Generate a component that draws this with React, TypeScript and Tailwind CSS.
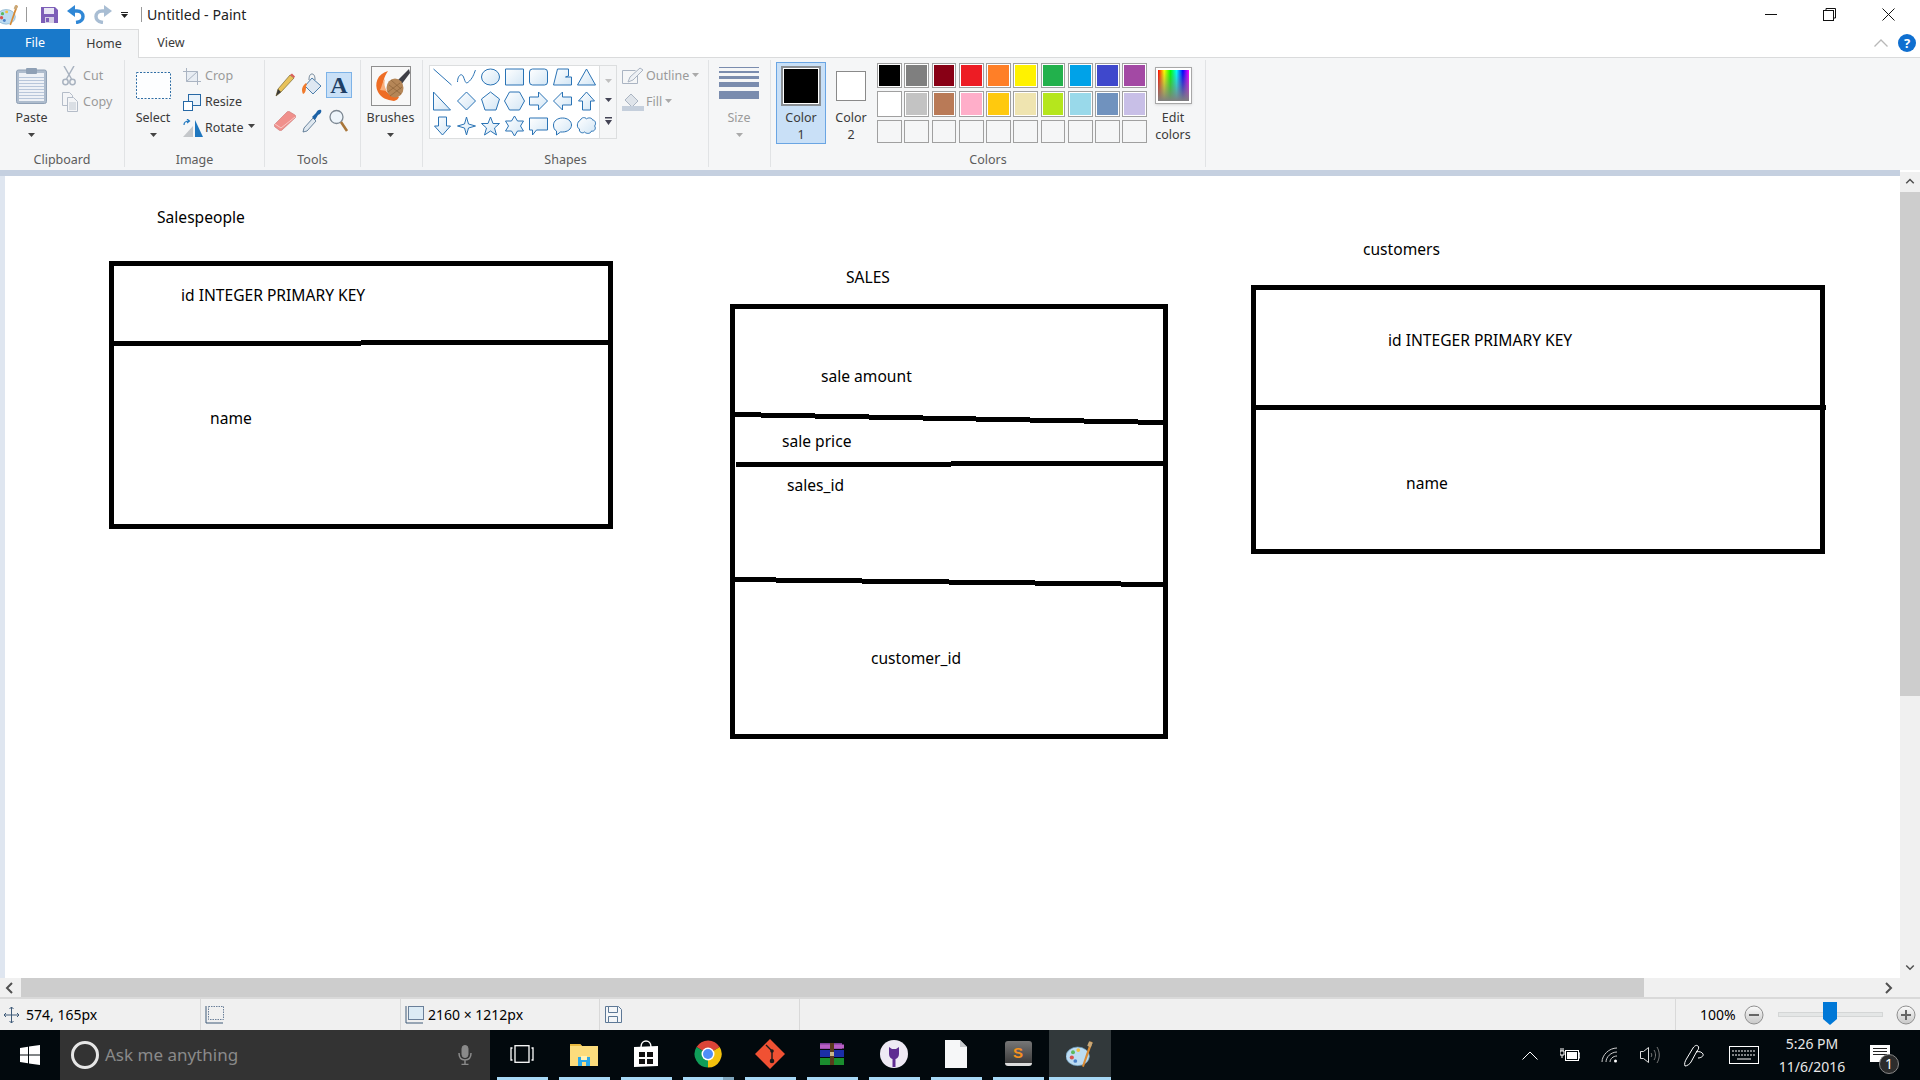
import React from "react";

const Caret = ({ c = "#444" }: { c?: string }) => (
  <svg width="7" height="4" viewBox="0 0 7 4"><path d="M0 0h7L3.5 4z" fill={c} /></svg>
);

const PaintIcon = ({ w = 24, h = 24 }: { w?: number; h?: number }) => (
  <svg width={w} height={h} viewBox="0 0 24 24">
    <ellipse cx="10" cy="14" rx="10" ry="8" fill="#bcdcf2" stroke="#6d9dbd" strokeWidth="0.6" />
    <circle cx="5" cy="15" r="1.8" fill="#d9534f" />
    <circle cx="6" cy="10.5" r="1.7" fill="#5cb85c" />
    <circle cx="10.5" cy="8.6" r="1.6" fill="#f0c040" />
    <circle cx="8" cy="18" r="1.6" fill="#4a80c8" />
    <path d="M21 1l1.8 1.2-7.5 21-1.6-.6z" fill="#d88a34" />
    <path d="M19.8 1l3 1.4-1.6 4-3-1.4z" fill="#c8a878" />
  </svg>
);

const Save = ({ c = "#7d5fb8", w = 17, h = 16 }: { c?: string; w?: number; h?: number }) => (
  <svg width={w} height={h} viewBox="0 0 17 16">
    <path d="M0 0h14l3 3v13H0z" fill={c} />
    <rect x="3" y="1" width="10" height="6" fill="#e8e6f4" />
    <rect x="4" y="10" width="9" height="6" fill="#d5d0e6" />
    <rect x="5" y="11" width="3" height="4" fill={c} />
  </svg>
);

const Arrow = ({ c, flip }: { c: string; flip?: boolean }) => (
  <svg width="18" height="19" viewBox="0 0 18 19" className={flip ? "-scale-x-100" : ""}>
    <path d="M7 6h3c4 0 6 2.500 6 5.500S13.500 17 9 17.500" fill="none" stroke={c} strokeWidth="3.400" />
    <path d="M8 0v12L0 6z" fill={c} />
  </svg>
);

const PasteIcon = () => (
  <svg width="31" height="37" viewBox="0 0 31 37">
    <rect x="0.500" y="3" width="30" height="33.500" rx="2" fill="#aebccd" stroke="#8fa0b5" />
    <rect x="3" y="6" width="25" height="28" fill="#eef1f6" />
    {[10, 13, 16, 19, 22, 25, 28, 31].map((y) => (
      <rect key={y} x="3" y={y} width="25" height="1" fill="#b8c6da" />
    ))}
    <rect x="10" y="1" width="11" height="6" rx="1" fill="#8fa0b5" />
  </svg>
);

const Scissors = () => (
  <svg width="14" height="20" viewBox="0 0 14 20" fill="none" stroke="#a9b3c0" strokeWidth="1.500">
    <path d="M2 0l7.500 13M12 0L4.500 13" />
    <circle cx="3.500" cy="16" r="2.700" />
    <circle cx="10.500" cy="16" r="2.700" />
  </svg>
);

const CopyIcon = () => (
  <svg width="16" height="20" viewBox="0 0 16 20" fill="#f4f5f7" stroke="#b4bcc8">
    <path d="M.5.500h7l3 3v10H.5z" />
    <path d="M5.500 5.500h6l4 4v10h-10z" />
    <path d="M7 11h7M7 13h7M7 15h7M7 17h7" strokeWidth="0.800" />
  </svg>
);

const SelectIcon = () => (
  <svg width="35" height="27" viewBox="0 0 35 27">
    <rect x="0.500" y="0.500" width="34" height="26" fill="#fdfeff" stroke="#2f6ea5" strokeDasharray="2 1.500" />
  </svg>
);

const CropIcon = () => (
  <svg width="18" height="17" viewBox="0 0 18 17" fill="none" stroke="#aab4c2">
    <rect x="4" y="4" width="10" height="9" fill="#e8edf3" stroke="none" />
    <path d="M0 3.500h14.500V17M3.500 0v13.500H18" />
    <path d="M3.500 13.500L14.500 3.500" />
  </svg>
);

const ResizeIcon = () => (
  <svg width="18" height="17" viewBox="0 0 18 17" fill="#fff" stroke="#2668a5">
    <rect x="5.500" y="0.500" width="12" height="11" fill="#e9f2fa" />
    <rect x="0.500" y="7.500" width="9" height="9" />
  </svg>
);

const RotateIcon = () => (
  <svg width="20" height="18" viewBox="0 0 20 18">
    <path d="M0 18L10 7v11z" fill="#c4c7ca" />
    <path d="M12 1l8 17h-8z" fill="#1f77bf" />
    <path d="M1 6c0-3 2-4 5-4M4 0l2.500 2L4 4" fill="none" stroke="#1f77bf" strokeWidth="1.200" />
  </svg>
);

const Pencil = () => (
  <svg width="20" height="24" viewBox="0 0 20 24">
    <path d="M1 23l2-7L15 2l4 3L6 19z" fill="#e8c25a" stroke="#7b6a33" strokeWidth="0.700" />
    <path d="M1 23l2-7 3 3z" fill="#3a3a3a" />
    <path d="M15 2l2-1.500 3 3L19 5z" fill="#d9605a" />
  </svg>
);

const Fill = () => (
  <svg width="22" height="24" viewBox="0 0 22 24">
    <path d="M11 5l9 8-8 8-8-8z" fill="#dfe8f2" stroke="#4e7fab" />
    <path d="M8 7c0-4 1-6 3-6s3 2 3 6" fill="none" stroke="#6a7f93" />
    <path d="M5 10C1 13 0 17 2 21c3-1 3-5 3-8 1-1 1-2 0-3z" fill="#f07a2c" />
  </svg>
);

const EraserIcon = () => (
  <svg width="22" height="20" viewBox="0 0 22 20">
    <path d="M1 13L13 1c1-1 2-1 3 0l5 3c1 1 1 2 0 3L8 19c-1 1-2 1-3 0l-4-3c-1-1-1-2 0-3z" fill="#f0908c" stroke="#c97672" strokeWidth="0.600" />
    <path d="M1 13l6 4 14-11" fill="none" stroke="#f8c7c4" />
  </svg>
);

const Picker = () => (
  <svg width="20" height="24" viewBox="0 0 20 24">
    <path d="M1 23l1-4L11 9l3 3-9 10z" fill="#dfe8f0" stroke="#4a6a88" strokeWidth="0.800" />
    <path d="M10 8l4-4c1-3 4-4 5-3s0 4-3 5l-3 5z" fill="#1d62a6" />
  </svg>
);

const Magnifier = () => (
  <svg width="20" height="24" viewBox="0 0 20 24">
    <circle cx="7.500" cy="8" r="6.500" fill="#eef5fb" stroke="#7d8893" strokeWidth="1.300" />
    <path d="M12 13l6 9" stroke="#a8763a" strokeWidth="2.600" />
  </svg>
);

const TextA = () => (
  <div className="w-[26px] h-[26px] bg-[#c9e0f7] border border-[#7db3e8] flex items-center justify-center font-['Liberation_Serif'] font-bold text-[24px] leading-none text-[#1e3f66]">A</div>
);

const BrushIcon = () => (
  <svg width="40" height="40" viewBox="0 0 40 40">
    <rect x="0.500" y="0.500" width="39" height="39" fill="#f8f8f8" stroke="#8f8f8f" />
    <path d="M38 3L26 15l4 4L39 7z" fill="#3f3f46" />
    <path d="M17 5C6 8 3 18 7 26c3 6 9 8 16 9 3-1 4-2 5-4-7-1-12-3-15-9-2-5 0-11 4-17z" fill="#ee6d25" />
    <path d="M9 24c2-3 2-8 5-11-1 4-1 8 2 12z" fill="#f8b07e" />
    <ellipse cx="24" cy="22" rx="8.500" ry="9.500" fill="#b58657" />
    <path d="M17 26l12-9M19 30l12-9M18 19l12 9M20 14l10 9" stroke="#8b6238" strokeWidth="0.700" />
  </svg>
);

const S = "#2a73b5";
const shapes: string[] = [
  "M1 2l18 16",
  "M1 15c0-6 4-10 6-5s2 8 6 4 5-9 6-11",
  "M1 10a9 8 0 1 0 18 0a9 8 0 1 0-18 0z",
  "M1 2h18v16H1z",
  "M4 2h12a3 3 0 0 1 3 3v10a3 3 0 0 1-3 3H4a3 3 0 0 1-3-3V5a3 3 0 0 1 3-3z",
  "M5 2h11v7l-3 1 6 0v8H1z",
  "M10 2l9 16H1z",
  "M1 1l17 18H1z",
  "M10 1l9 9-9 9-9-9z",
  "M10 1l9 7-3.500 11h-11L1 8z",
  "M5 1h10l5 9-5 9H5l-5-9z",
  "M1 6h9V1l9 9-9 9v-5H1z",
  "M19 6h-9V1l-9 9 9 9v-5h9z",
  "M10 1l8 9h-4v9H6v-9H2z",
  "M10 19l8-9h-4V1H6v9H2z",
  "M10 1l2 7 7 2-7 2-2 7-2-7-7-2 7-2z",
  "M10 1l2.500 6.500H19l-5 4.500 2 7-6-4-6 4 2-7-5-4.500h6.500z",
  "M10 0l3 5h6l-3 5 3 5h-6l-3 5-3-5H1l3-5-3-5h6z",
  "M1 2h18v12H8l-4 5v-5H1z",
  "M10 2c5 0 9 3 9 7s-4 7-9 7H8l-4 3v-4c-2-1-3-3-3-6 0-4 4-7 9-7z",
  "M4 4c1-3 5-3 6-1 2-2 6-1 6 1 3 0 4 4 2 6 2 2 0 6-3 5-1 3-5 3-7 1-2 2-6 0-5-3-3-1-3-7 1-9z",
];

const ShapeIcon = ({ d }: { d: string }) => (
  <div className="flex items-center justify-center">
    <svg width="21" height="20" viewBox="0 0 20 20" overflow="visible">
      <defs>
        <linearGradient id="sg" x1="0" y1="0" x2="1" y2="1">
          <stop offset="0" stopColor="#ffffff" />
          <stop offset="1" stopColor="#d3e6f5" />
        </linearGradient>
      </defs>
      <path d={d} fill={d.startsWith("M1 2l18") || d.startsWith("M1 15c") ? "none" : "url(#sg)"} stroke={S} strokeWidth="1" />
    </svg>
  </div>
);

const palette = [
  "bg-[#000000]", "bg-[#7f7f7f]", "bg-[#880015]", "bg-[#ed1c24]", "bg-[#ff7f27]", "bg-[#fff200]", "bg-[#22b14c]", "bg-[#00a2e8]", "bg-[#3f48cc]", "bg-[#a349a4]",
  "bg-[#ffffff]", "bg-[#c3c3c3]", "bg-[#b97a57]", "bg-[#ffaec9]", "bg-[#ffc90e]", "bg-[#efe4b0]", "bg-[#b5e61d]", "bg-[#99d9ea]", "bg-[#7092be]", "bg-[#c8bfe7]",
];

const Group = ({ label, w, children }: { label: string; w: string; children: React.ReactNode }) => (
  <div className={`flex flex-col h-[107px] pt-[2px] border-r border-[#e1e3e5] shrink-0 ${w}`}>
    <div className="flex h-[89px]">{children}</div>
    <div className="h-[16px] leading-[17px] text-center text-[12.5px] text-[#5c5c5c]">{label}</div>
  </div>
);

const Large = ({ w, icon, lines, caret, muted }: { w: string; icon: React.ReactNode; lines: string[]; caret?: boolean; muted?: boolean }) => (
  <div className={`flex flex-col items-center shrink-0 ${w}`}>
    <div className="h-[47px] flex items-center justify-center">{icon}</div>
    {lines.map((l) => (
      <div key={l} className={`h-[17px] leading-[17px] text-[12.5px] ${muted ? "text-[#9a9a9a]" : "text-[#3a3a3a]"}`}>{l}</div>
    ))}
    {caret && (
      <div className="h-[17px] flex items-center justify-center">
        <Caret c={muted ? "#aaa" : "#444"} />
      </div>
    )}
  </div>
);

const Small = ({ icon, text, muted, extra, slot = "w-[22px]" }: { icon: React.ReactNode; text: string; muted?: boolean; extra?: React.ReactNode; slot?: string }) => (
  <div className={`h-[26px] flex items-center text-[12.5px] ${muted ? "text-[#9a9a9a]" : "text-[#3a3a3a]"}`}>
    <div className={`${slot} shrink-0 flex items-center`}>{icon}</div>
    <span>{text}</span>
    {extra}
  </div>
);

const Ribbon = () => (
  <div className="h-[113px] bg-[#f5f6f7] border-t border-[#dadbdc] flex pt-[2px] shrink-0">
    <Group label="Clipboard" w="w-[125px]">
      <div className="ml-[16px]">
        <Large w="w-[31px]" icon={<PasteIcon />} lines={["Paste"]} caret />
      </div>
      <div className="ml-[15px] mt-[1px]">
        <Small muted slot="w-[21px]" text="Cut" icon={<Scissors />} />
        <Small muted slot="w-[21px]" text="Copy" icon={<CopyIcon />} />
      </div>
    </Group>
    <Group label="Image" w="w-[140px]">
      <div className="ml-[10px]">
        <Large w="w-[36px]" icon={<SelectIcon />} lines={["Select"]} caret />
      </div>
      <div className="ml-[12px] mt-[1px]">
        <Small muted text="Crop" icon={<CropIcon />} />
        <Small text="Resize" icon={<ResizeIcon />} />
        <Small text="Rotate" icon={<RotateIcon />} extra={<span className="ml-[5px] mb-[4px] flex"><Caret /></span>} />
      </div>
    </Group>
    <Group label="Tools" w="w-[96px]">
      <div className="ml-[6px] mt-[5px] grid grid-cols-[27px_27px_28px] grid-rows-[36px_36px] place-items-center">
        <Pencil />
        <Fill />
        <TextA />
        <EraserIcon />
        <Picker />
        <Magnifier />
      </div>
    </Group>
    <Group label="" w="w-[62px]">
      <div className="pr-[2px] w-full">
        <Large w="w-full" icon={<BrushIcon />} lines={["Brushes"]} caret />
      </div>
    </Group>
    <Group label="Shapes" w="w-[286px]">
      <div className="ml-[6px] mt-[3px] flex h-[74px]">
        <div className="w-[171px] bg-white border border-[#dcdedf] grid grid-cols-7 grid-rows-[22px_26px_24px]">
          {shapes.map((d) => (
            <ShapeIcon key={d} d={d} />
          ))}
        </div>
        <div className="w-[17px] border border-l-0 border-[#dcdedf] flex flex-col items-center justify-around py-[6px]">
          <Caret c="#c0c0c0" />
          <Caret c="#445" />
          <svg width="7" height="8" viewBox="0 0 7 8"><path d="M0 0h7v1.500H0zM0 3h7L3.500 8z" fill="#445" /></svg>
        </div>
      </div>
      <div className="ml-[5px] mt-[1px]">
        <Small
          muted
          slot="w-[24px]"
          text="Outline"
          icon={
            <svg width="22" height="18" viewBox="0 0 22 18" fill="none" stroke="#aab4c2">
              <path d="M.5 3.500h13M.5 3.500v13h15V8" />
              <path d="M6 15l2-5L18 1l3 2-10 10z" fill="#eef1f5" />
            </svg>
          }
          extra={<span className="ml-[3px] mb-[2px] flex"><Caret c="#aaa" /></span>}
        />
        <Small
          muted
          slot="w-[24px]"
          text="Fill"
          icon={
            <svg width="22" height="20" viewBox="0 0 22 20">
              <path d="M9 2l7 7-6 6-7-7z" fill="#dfe4ea" stroke="#aab4c2" />
              <rect x="0" y="14" width="22" height="5" fill="#c5cfdc" />
            </svg>
          }
          extra={<span className="ml-[3px] mb-[2px] flex"><Caret c="#aaa" /></span>}
        />
      </div>
    </Group>
    <Group label="" w="w-[62px]">
      <div className="ml-[10px] w-[40px]">
        <div className="h-[47px] pt-[5px] flex flex-col">
          <div className="h-px bg-[#7a8cae] mb-[3px]" />
          <div className="h-[2px] bg-[#7a8cae] mb-[3px]" />
          <div className="h-[3px] bg-[#7a8cae] mb-[3px]" />
          <div className="h-[5px] bg-[#7a8cae] mb-[4px]" />
          <div className="h-[8px] bg-[#7a8cae]" />
        </div>
        <div className="h-[17px] leading-[17px] text-center text-[12.5px] text-[#9a9a9a]">Size</div>
        <div className="h-[17px] flex items-center justify-center"><Caret c="#aaa" /></div>
      </div>
    </Group>
    <Group label="Colors" w="w-[435px]">
      <div className="ml-[5px] w-[50px] h-[82px] bg-[#c9e0f7] border border-[#6aa5e3] flex flex-col items-center">
        <div className="h-[46px] flex items-center">
          <div className="w-[40px] h-[40px] border-2 border-[#8a8f94] p-[1px] bg-white">
            <div className="w-full h-full bg-black" />
          </div>
        </div>
        <div className="h-[17px] leading-[17px] text-[12.5px] text-[#3a3a3a]">Color</div>
        <div className="h-[17px] leading-[17px] text-[12.5px] text-[#3a3a3a]">1</div>
      </div>
      <div className="w-[49px] pl-[1px] flex flex-col items-center">
        <div className="h-[47px] flex items-center">
          <div className="w-[30px] h-[30px] border border-[#8a8a8a] bg-white" />
        </div>
        <div className="h-[17px] leading-[17px] text-[12.5px] text-[#3a3a3a]">Color</div>
        <div className="h-[17px] leading-[17px] text-[12.5px] text-[#3a3a3a]">2</div>
      </div>
      <div className="ml-[2px] mt-[1px] grid grid-cols-10 gap-x-[2.500px] gap-y-[3px] w-[270px] h-[80px]">
        {palette.map((c, i) => (
          <div key={i} className="border border-[#a0a0a0] p-[1px] bg-white">
            <div className={`w-full h-full ${c}`} />
          </div>
        ))}
        {Array.from({ length: 10 }).map((_, i) => (
          <div key={i} className="border border-[#a0a0a0]" />
        ))}
      </div>
      <div className="ml-[1px] w-[50px] flex flex-col items-center">
        <div className="h-[47px] flex items-center">
          <div className="w-[37px] h-[37px] border border-[#a8a8a8] bg-white p-[2px] shadow-sm">
            <div className="w-full h-full bg-[linear-gradient(to_bottom,transparent,#808080),linear-gradient(to_right,#ff0000,#ffff00,#00ff00,#00ffff,#0000ff,#ff00ff)]" />
          </div>
        </div>
        <div className="h-[17px] leading-[17px] text-[12.5px] text-[#3a3a3a]">Edit</div>
        <div className="h-[17px] leading-[17px] text-[12.5px] text-[#3a3a3a]">colors</div>
      </div>
    </Group>
  </div>
);

const Canvas = () => (
  <div className="relative flex-1 bg-white border-l-[5px] border-[#c5d0e0]">
    <div className="absolute left-[-5px] top-0 w-[5px] h-full bg-[#dfe6f0]" />
    <div className="absolute left-[104px] top-[85px] w-[504px] h-[268px] border-[5px] border-black" />
    <div className="absolute left-[725px] top-[128px] w-[438px] h-[435px] border-[5px] border-black" />
    <div className="absolute left-[1246px] top-[109px] w-[574px] h-[269px] border-[5px] border-black" />
    <svg className="absolute left-[-5px] top-0" width="1900" height="600" shapeRendering="crispEdges">
      <g fill="#000">
        <rect x="114" y="165" width="247" height="5" />
        <rect x="361" y="164" width="247" height="5" />
        <rect x="735" y="236" width="26" height="5" />
        <rect x="761" y="237" width="54" height="5" />
        <rect x="815" y="238" width="54" height="5" />
        <rect x="869" y="239" width="54" height="5" />
        <rect x="923" y="240" width="53" height="5" />
        <rect x="976" y="241" width="54" height="5" />
        <rect x="1030" y="242" width="54" height="5" />
        <rect x="1084" y="243" width="54" height="5" />
        <rect x="1138" y="244" width="25" height="5" />
        <rect x="736" y="286" width="215" height="5" />
        <rect x="951" y="285" width="212" height="5" />
        <rect x="735" y="401" width="41" height="5" />
        <rect x="776" y="402" width="86" height="5" />
        <rect x="862" y="403" width="87" height="5" />
        <rect x="949" y="404" width="86" height="5" />
        <rect x="1035" y="405" width="86" height="5" />
        <rect x="1121" y="406" width="42" height="5" />
        <rect x="1256" y="229" width="570" height="5" />
      </g>
    </svg>
    <div className="text-[15.600px] leading-5 text-black whitespace-nowrap">
      <div className="absolute left-[152px] top-[31px]">Salespeople</div>
      <div className="absolute left-[176px] top-[109px]">id INTEGER PRIMARY KEY</div>
      <div className="absolute left-[205px] top-[232px]">name</div>
      <div className="absolute left-[841px] top-[91px]">SALES</div>
      <div className="absolute left-[816px] top-[190px]">sale amount</div>
      <div className="absolute left-[777px] top-[255px]">sale price</div>
      <div className="absolute left-[782px] top-[299px]">sales_id</div>
      <div className="absolute left-[866px] top-[472px]">customer_id</div>
      <div className="absolute left-[1358px] top-[63px]">customers</div>
      <div className="absolute left-[1383px] top-[154px]">id INTEGER PRIMARY KEY</div>
      <div className="absolute left-[1401px] top-[297px]">name</div>
    </div>
  </div>
);

const Chev = ({ dir }: { dir: "up" | "down" | "left" | "right" }) => {
  const d = { up: "M1 7l5-5 5 5", down: "M1 2l5 5 5-5", left: "M7 1L2 6l5 5", right: "M2 1l5 5-5 5" }[dir];
  return (
    <svg width="12" height="12" viewBox="0 0 12 12" className={dir === "up" || dir === "down" ? "h-[9px]" : ""}>
      <path d={d} fill="none" stroke="#505050" strokeWidth="2" />
    </svg>
  );
};

const VScroll = () => (
  <div className="w-[20px] bg-[#f0f0f0] flex flex-col shrink-0 -mt-[4px]">
    <div className="h-[20px] flex items-center justify-center"><Chev dir="up" /></div>
    <div className="h-[504px] bg-[#cdcdcd]" />
    <div className="flex-1" />
    <div className="h-[20px] flex items-center justify-center"><Chev dir="down" /></div>
  </div>
);

const HScroll = () => (
  <div className="h-[19px] bg-[#f0f0f0] flex items-center shrink-0 pr-[20px]">
    <div className="w-[21px] flex justify-center"><Chev dir="left" /></div>
    <div className="w-[1623px] h-full bg-[#cdcdcd]" />
    <div className="flex-1" />
    <div className="w-[20px] flex justify-center"><Chev dir="right" /></div>
  </div>
);

const Circle = ({ plus }: { plus?: boolean }) => (
  <svg width="20" height="20" viewBox="0 0 20 20">
    <defs>
      <linearGradient id="cg" x1="0" y1="0" x2="0" y2="1">
        <stop offset="0" stopColor="#fbfbfb" />
        <stop offset="1" stopColor="#c8c8c8" />
      </linearGradient>
    </defs>
    <circle cx="10" cy="10" r="9" fill="url(#cg)" stroke="#8f8f8f" />
    <path d={plus ? "M5 10h10M10 5v10" : "M5 10h10"} stroke="#666" strokeWidth="2" />
  </svg>
);

const Status = () => (
  <div className="h-[33px] bg-[#f0f0f0] border-t-2 border-[#d9d9d9] flex text-[14px] text-black shrink-0">
    <div className="w-[201px] border-r border-[#d9d9d9] flex items-center pl-[3px]">
      <svg width="17" height="18" viewBox="0 0 17 18" fill="none" stroke="#3e5a78">
        <path d="M8.500 1v16M1 9h15M6.500 3l2-2 2 2M6.500 15l2 2 2-2M3 7L1 9l2 2M14 7l2 2-2 2" />
      </svg>
      <span className="ml-[6px]">574, 165px</span>
    </div>
    <div className="w-[200px] border-r border-[#d9d9d9] flex items-center pl-[4px]">
      <svg width="19" height="18" viewBox="0 0 19 18" fill="none">
        <rect x="3.500" y="0.500" width="15" height="13" stroke="#6a7f99" strokeDasharray="1.500 1" />
        <path d="M1 0v17h17" stroke="#3e5a78" />
      </svg>
    </div>
    <div className="w-[199px] border-r border-[#d9d9d9] flex items-center pl-[4px]">
      <svg width="19" height="18" viewBox="0 0 19 18" fill="none">
        <rect x="3.500" y="0.500" width="15" height="13" fill="#dcebf5" stroke="#6a7f99" />
        <path d="M1 0v17h17" stroke="#3e5a78" />
      </svg>
      <span className="ml-[4px]">2160 × 1212px</span>
    </div>
    <div className="w-[200px] border-r border-[#d9d9d9] flex items-center pl-[5px]">
      <svg width="17" height="17" viewBox="0 0 17 17" fill="#f4f6f8" stroke="#5d7896">
        <path d="M.5.500h13l3 3v13H.5z" />
        <path d="M3.500.500h9v6h-9zM3.500 16.500v-6h9v6z" />
      </svg>
    </div>
    <div className="w-[876px] border-r border-[#d9d9d9]" />
    <div className="flex-1 flex items-center pl-[24px]">
      <span className="w-[44px]">100%</span>
      <Circle />
      <div className="relative ml-[14px] w-[105px] h-[5px] bg-[#e4e6e6] border border-[#d4d6d6]">
        <svg className="absolute left-[44px] top-[-11px]" width="14" height="24" viewBox="0 0 14 24">
          <path d="M0 0h14v17l-7 6-7-6z" fill="#0078d7" />
        </svg>
      </div>
      <div className="ml-[13px]"><Circle plus /></div>
    </div>
  </div>
);

const TaskCell = ({ children, active, split }: { children: React.ReactNode; active?: boolean; split?: boolean }) => (
  <div className={`w-[62px] h-full flex flex-col items-center ${active ? "bg-[#32393b]" : ""}`}>
    <div className="flex-1 flex items-center justify-center">{children}</div>
    <div className={`h-[3px] flex ${active ? "w-full" : "w-[51px]"} bg-[#a6d8f5]`}>
      {split && <div className="ml-auto w-[11px] bg-[#7fa6bd]" />}
    </div>
  </div>
);

const WinLogo = ({ c = "#fff", s = 20 }: { c?: string; s?: number }) => (
  <svg width={s} height={s} viewBox="0 0 20 20" fill={c}>
    <path d="M0 3l8-1.200V9.500H0zM9 1.600L20 0v9.500H9zM0 10.500h8v7.700L0 17zM9 10.500h11V20L9 18.400z" />
  </svg>
);

const Tray = ({ w, children }: { w: string; children: React.ReactNode }) => (
  <div className={`${w} flex items-center justify-center shrink-0`}>{children}</div>
);

const Taskbar = () => (
  <div className="h-[50px] bg-[#02090d] flex shrink-0 text-white">
    <div className="w-[60px] flex items-center justify-center"><WinLogo /></div>
    <div className="w-[430px] bg-[#333333] flex items-center">
      <div className="ml-[11px] w-[28px] h-[28px] rounded-full border-[3.500px] border-[#e6e6e6]" />
      <span className="ml-[6px] text-[17px] text-[#8a8a8a]">Ask me anything</span>
      <div className="ml-auto mr-[18px]">
        <svg width="14" height="20" viewBox="0 0 14 20" fill="none" stroke="#8a8a8a">
          <rect x="4" y="0.500" width="6" height="12" rx="3" fill="#8a8a8a" />
          <path d="M1 8c0 5 2.500 7 6 7s6-2 6-7M7 15v4M3.500 19.500h7" strokeWidth="1.500" />
        </svg>
      </div>
    </div>
    <div className="ml-[1px] flex h-full">
      <TaskCell>
        <svg width="24" height="18" viewBox="0 0 24 18" fill="none" stroke="#fff" strokeWidth="1.300">
          <rect x="5" y="0.700" width="14" height="16.600" />
          <path d="M2.500 3H1v12h1.500M21.500 3H23v12h-1.500" />
        </svg>
      </TaskCell>
      <TaskCell>
        <svg width="28" height="24" viewBox="0 0 28 24">
          <path d="M0 2h10l2 2h16v20H0z" fill="#fcdc7c" />
          <path d="M0 2h10l2 2H0z" fill="#e9b93f" />
          <path d="M8 24v-9h12v9h-4v-4h-4v4z" fill="#2ba8e8" />
          <path d="M11 14h6v4h-6z" fill="#fff3b8" />
        </svg>
      </TaskCell>
      <TaskCell>
        <svg width="26" height="28" viewBox="0 0 26 28" fill="#fff">
          <path d="M1 7l24-1v20L1 27z" />
          <path d="M8 7c0-8 10-8 10 0" fill="none" stroke="#fff" strokeWidth="1.500" />
          <path d="M6 12h6v5H6zM14 12h6v5h-6zM6 19h6v5H6zM14 19h6v5h-6z" fill="#111" />
        </svg>
      </TaskCell>
      <TaskCell split>
        <svg width="28" height="28" viewBox="0 0 28 28">
          <path d="M14 14L2.500 7A13.500 13.500 0 0 1 25.700 7z" fill="#db4437" />
          <path d="M14 14L25.700 7A13.500 13.500 0 0 1 14 27.500z" fill="#f4c20d" />
          <path d="M14 14v13.500A13.500 13.500 0 0 1 2.500 7z" fill="#0f9d58" />
          <circle cx="14" cy="14" r="6.500" fill="#fff" />
          <circle cx="14" cy="14" r="5" fill="#4f8ef7" />
        </svg>
      </TaskCell>
      <TaskCell>
        <svg width="30" height="30" viewBox="0 0 30 30">
          <path d="M15 0l15 15-15 15L0 15z" fill="#f05133" />
          <path d="M11 6l6 6v9" fill="none" stroke="#1a1a1a" strokeWidth="1.400" />
          <circle cx="17" cy="22" r="2.300" fill="#1a1a1a" />
          <circle cx="17" cy="12" r="1.800" fill="#1a1a1a" />
        </svg>
      </TaskCell>
      <TaskCell>
        <svg width="26" height="22" viewBox="0 0 26 22">
          <rect x="1" y="0" width="22" height="6" fill="#7c3f98" />
          <rect x="1" y="1.500" width="24" height="4" fill="#b85fc4" />
          <rect x="1" y="7" width="24" height="7" fill="#1b2ea8" />
          <rect x="1" y="15" width="24" height="7" fill="#1a8d2e" />
          <rect x="11" y="0" width="4" height="22" fill="#5a3a1c" />
          <rect x="11" y="9" width="4" height="4" fill="#c9b68a" />
        </svg>
      </TaskCell>
      <TaskCell>
        <svg width="28" height="28" viewBox="0 0 28 28">
          <ellipse cx="14" cy="14" rx="14" ry="14" fill="#eee9f4" />
          <path d="M9 7l3 2h4l3-2v7c0 3-2 4.500-3.500 5v8h-3v-8C11 18.500 9 17 9 14z" fill="#5f2d91" />
        </svg>
      </TaskCell>
      <TaskCell>
        <svg width="22" height="28" viewBox="0 0 22 28">
          <path d="M0 0h15l7 7v21H0z" fill="#f6f7f8" />
          <path d="M15 0l7 7h-7z" fill="#c6c9cc" />
        </svg>
      </TaskCell>
      <TaskCell>
        <div className="w-[27px] h-[25px] rounded-[3px] bg-[linear-gradient(#777,#3c3c3c)] border-b-[3px] border-[#ddd] flex items-center justify-center font-['Liberation_Sans'] font-bold text-[15px] leading-none text-[#f5911e]">S</div>
      </TaskCell>
      <TaskCell active>
        <PaintIcon w={28} h={28} />
      </TaskCell>
    </div>
    <div className="ml-auto flex h-full">
      <Tray w="w-[40px]">
        <svg width="16" height="9" viewBox="0 0 16 9" fill="none" stroke="#fff"><path d="M.5 8.500L8 1l7.500 7.500" /></svg>
      </Tray>
      <Tray w="w-[40px]">
        <svg width="20" height="14" viewBox="0 0 20 14" fill="none">
          <rect x="5.500" y="2.500" width="13" height="10" stroke="#fff" />
          <rect x="7" y="4" width="10" height="7" fill="#fff" />
          <path d="M19 5h1v5h-1zM0 3h4v4H0zM1 0v3M3 0v3M2 7v3" stroke="#fff" />
        </svg>
      </Tray>
      <Tray w="w-[40px]">
        <svg width="18" height="16" viewBox="0 0 18 16" fill="none" stroke="#ccc">
          <path d="M1 15C1 8 8 1 16 1M5 15c0-5 5-10 11-10M9 15c0-3 3-6 7-6" />
          <circle cx="14.500" cy="14" r="1.500" fill="#fff" stroke="none" />
        </svg>
      </Tray>
      <Tray w="w-[40px]">
        <svg width="20" height="18" viewBox="0 0 20 18" fill="none" stroke="#ddd">
          <path d="M.5 5.500h3l5-4v15l-5-4h-3z" />
          <path d="M11 7c1 1 1 3 0 4M14 4c2 3 2 7 0 10M17 1c3 5 3 11 0 16" stroke="#777" />
        </svg>
      </Tray>
      <Tray w="w-[48px]">
        <svg width="20" height="23" viewBox="0 0 20 23" fill="none" stroke="#fff">
          <path d="M1 22c-1-2 0-5 2-8l6-10c2-3 4-3 5-2s1 3-1 5L7 18c-1 2-4 4-6 4z" />
          <path d="M12 8c3-1 6 0 7 2s-2 4-5 4" />
        </svg>
      </Tray>
      <Tray w="w-[52px]">
        <svg width="30" height="18" viewBox="0 0 30 18" fill="none" stroke="#fff">
          <rect x="0.500" y="0.500" width="29" height="17" />
          <path d="M3 5h24M3 9h24" strokeDasharray="2 1" />
          <path d="M8 13h14" />
        </svg>
      </Tray>
      <div className="w-[84px] shrink-0 flex flex-col items-center justify-center text-[14px] leading-[23px] text-[#e8e8e8]">
        <div>5:26 PM</div>
        <div>11/6/2016</div>
      </div>
      <div className="w-[52px] shrink-0 mr-[14px] flex items-start justify-center pt-[15px]">
        <div className="relative w-[20px] h-[17px] bg-white">
          <div className="mt-[3px] mx-[3px] h-px bg-[#222]" />
          <div className="mt-[2px] mx-[3px] h-px bg-[#222]" />
          <div className="mt-[2px] mx-[3px] h-px bg-[#222]" />
          <div className="absolute left-[9px] top-[9px] w-[20px] h-[20px] rounded-full bg-[#2c2c2c] border border-[#888] flex items-center justify-center text-[14px] leading-none text-white">1</div>
        </div>
      </div>
    </div>
  </div>
);

export default function App() {
  return (
    <div className="w-[1920px] h-[1080px] overflow-hidden flex flex-col bg-white font-['Noto_Sans','Open_Sans',sans-serif] text-black">
      <div className="h-[29px] flex items-center shrink-0">
        <div className="w-[19px] h-[24px] overflow-hidden flex justify-end"><div className="shrink-0"><PaintIcon w={22} h={24} /></div></div>
        <div className="ml-[7px] w-px h-[15px] bg-[#999]" />
        <div className="ml-[14px]"><Save /></div>
        <div className="ml-[9px]"><Arrow c="#2f87d6" /></div>
        <div className="ml-[9px]"><Arrow c="#a8bdd3" flip /></div>
        <div className="ml-[9px] flex flex-col items-center">
          <div className="w-[7px] h-px bg-[#222] mb-[1px]" />
          <Caret c="#222" />
        </div>
        <div className="ml-[13px] w-px h-[15px] bg-[#999]" />
        <div className="ml-[5px] text-[14.200px] text-[#222]">Untitled - Paint</div>
        <div className="ml-auto flex items-center">
          <svg width="12" height="2" viewBox="0 0 12 2"><rect width="12" height="1" fill="#111" /></svg>
          <svg className="ml-[46px]" width="13" height="13" viewBox="0 0 13 13" fill="none" stroke="#111"><rect x="0.500" y="2.500" width="10" height="10" /><path d="M3 2.500V.500h9.500V10H10.500" /></svg>
          <svg className="ml-[46px] mr-[25px]" width="13" height="13" viewBox="0 0 13 13" fill="none" stroke="#111"><path d="M.5.500l12 12M12.500.500l-12 12" /></svg>
        </div>
      </div>
      <div className="h-[28px] flex items-stretch shrink-0 text-[12.500px] relative">
        <div className="w-[70px] bg-[#1979ca] text-white flex items-center justify-center">File</div>
        <div className="w-[69px] h-[29px] bg-[#f5f6f7] border-t border-r border-[#dadbdc] text-[#3a3a3a] flex items-center justify-center z-10">Home</div>
        <div className="w-[64px] text-[#3a3a3a] flex items-center justify-center">View</div>
        <div className="ml-auto flex items-center">
          <svg width="14" height="8" viewBox="0 0 14 8" fill="none" stroke="#b8b8b8" strokeWidth="1.300"><path d="M.5 7.500L7 1l6.500 6.500" /></svg>
          <div className="ml-[10px] mr-[4px] w-[18px] h-[18px] rounded-full bg-[#0f6fd0] text-white font-bold text-[13px] leading-none flex items-center justify-center">?</div>
        </div>
      </div>
      <Ribbon />
      <div className="h-[6px] bg-[#c5d0e0] shrink-0 mr-[20px]" />
      <div className="flex flex-1 min-h-0">
        <Canvas />
        <VScroll />
      </div>
      <HScroll />
      <Status />
      <Taskbar />
    </div>
  );
}
